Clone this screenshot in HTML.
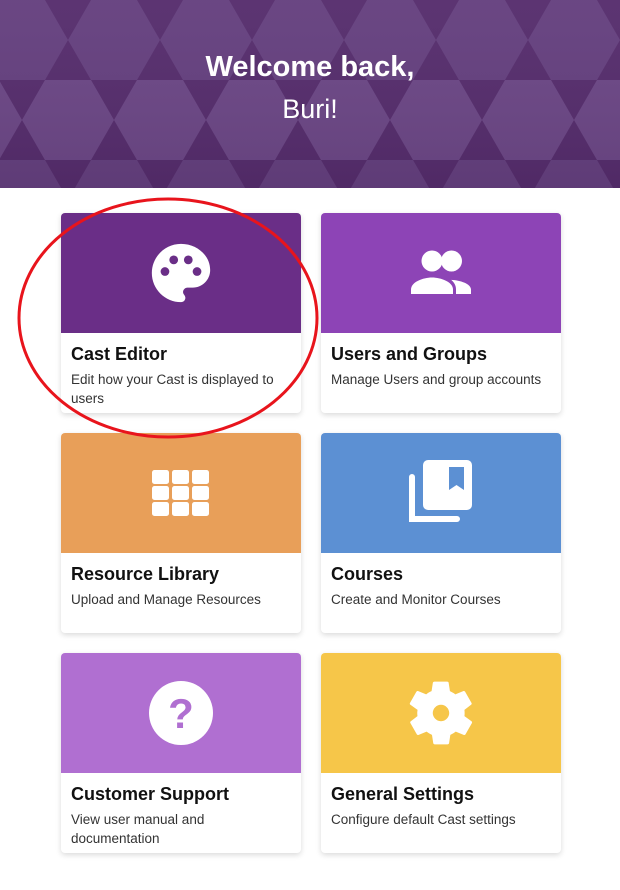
<!DOCTYPE html>
<html><head><meta charset="utf-8"><style>
*{margin:0;padding:0;box-sizing:border-box}
body{width:620px;height:890px;background:#fff;font-family:"Liberation Sans",sans-serif;position:relative;overflow:hidden}
.hdr{position:absolute;left:0;top:0;width:620px;height:188px;background:#542c6c;overflow:hidden}
.hdr svg{position:absolute;left:0;top:0}
.h1{position:absolute;top:51px;width:620px;text-align:center;color:#fff;font-weight:bold;font-size:29px}
.h2{position:absolute;top:94px;width:620px;text-align:center;color:#fff;font-size:27px}
.card{position:absolute;width:240px;height:200px;border-radius:4px;background:#fff;box-shadow:0 2px 6px rgba(0,0,0,.15);overflow:hidden}
.top{height:120px;display:flex;align-items:center;justify-content:center}
.t{position:absolute;left:10px;top:131px;font-size:18px;font-weight:bold;color:#111}
.d{position:absolute;left:10px;top:157px;font-size:13.5px;color:#333;line-height:19px;width:225px}
</style></head><body>
<div class="hdr">
<svg width="620" height="188">
<defs><pattern id="p" width="92" height="160" patternUnits="userSpaceOnUse" x="-24" y="-40">
<rect width="92" height="160" fill="#552c6c"/>
<g fill="#6b4685">
<polygon points="-46,0 -23,-40 23,-40 46,0 23,40 -23,40"/>
<polygon points="46,0 69,-40 115,-40 138,0 115,40 69,40"/>
<polygon points="-46,160 -23,120 23,120 46,160 23,200 -23,200"/>
<polygon points="46,160 69,120 115,120 138,160 115,200 69,200"/>
<polygon points="0,80 23,40 69,40 92,80 69,120 23,120" fill="#643f7e"/>
</g>
</pattern>
<linearGradient id="g" x1="0" y1="0" x2="0" y2="1"><stop offset="0" stop-color="#fff" stop-opacity=".04"/><stop offset="1" stop-color="#000" stop-opacity=".06"/></linearGradient></defs>
<rect width="620" height="188" fill="url(#p)"/>
<rect width="620" height="188" fill="url(#g)"/>
</svg>
<div class="h1">Welcome back,</div>
<div class="h2">Buri!</div>
</div>

<div class="card" style="left:61px;top:213px"><div class="top" style="background:#6a2e87">
<svg width="70" height="70" viewBox="0 0 24 24"><path fill="#fff" d="M12 2C6.5 2 2 6.5 2 12s4.5 10 10 10c.9 0 1.5-.7 1.5-1.5 0-.4-.2-.7-.4-1-.2-.3-.4-.6-.4-1 0-.8.7-1.5 1.5-1.5H16c3.3 0 6-2.7 6-6C22 6 17.5 2 12 2z"/><circle cx="6.5" cy="11.5" r="1.5" fill="#6a2e87"/><circle cx="9.5" cy="7.5" r="1.5" fill="#6a2e87"/><circle cx="14.5" cy="7.5" r="1.5" fill="#6a2e87"/><circle cx="17.5" cy="11.5" r="1.5" fill="#6a2e87"/></svg>
</div><div class="t">Cast Editor</div><div class="d">Edit how your Cast is displayed to users</div></div>

<div class="card" style="left:321px;top:213px"><div class="top" style="background:#8d44b6">
<svg width="72" height="72" viewBox="0 0 24 24"><circle cx="9" cy="8" r="3.5" fill="#fff"/><circle cx="15.5" cy="8" r="3.5" fill="#fff"/><path fill="#fff" d="M2 19v-1.5c0-2.5 4-4 7-4s7 1.5 7 4V19z"/><path fill="#fff" d="M17 19v-1.5c0-1.3-.6-2.4-1.6-3.2 2.9.1 6.6 1.3 6.6 3.2V19z"/></svg>
</div><div class="t">Users and Groups</div><div class="d">Manage Users and group accounts</div></div>

<div class="card" style="left:61px;top:433px"><div class="top" style="background:#e89f59">
<svg width="58" height="46" viewBox="0 0 58 46"><g fill="#fff"><rect x="0" y="0" width="17" height="14" rx="2.5"/><rect x="20" y="0" width="17" height="14" rx="2.5"/><rect x="40" y="0" width="17" height="14" rx="2.5"/><rect x="0" y="16" width="17" height="14" rx="2.5"/><rect x="20" y="16" width="17" height="14" rx="2.5"/><rect x="40" y="16" width="17" height="14" rx="2.5"/><rect x="0" y="32" width="17" height="14" rx="2.5"/><rect x="20" y="32" width="17" height="14" rx="2.5"/><rect x="40" y="32" width="17" height="14" rx="2.5"/></g></svg>
</div><div class="t">Resource Library</div><div class="d">Upload and Manage Resources</div></div>

<div class="card" style="left:321px;top:433px"><div class="top" style="background:#5c90d3">
<svg width="66" height="66" viewBox="0 0 66 66"><path fill="none" stroke="#fff" stroke-width="6" stroke-linecap="round" d="M4 17v42h45"/><rect x="15" y="0" width="49" height="50" rx="5" fill="#fff"/><path fill="#5c90d3" d="M41 7h15v23l-7.5-5-7.5 5z"/></svg>
</div><div class="t">Courses</div><div class="d">Create and Monitor Courses</div></div>

<div class="card" style="left:61px;top:653px"><div class="top" style="background:#b06fd1">
<svg width="66" height="66" viewBox="0 0 66 66"><circle cx="33" cy="33" r="32" fill="#fff"/><text x="33" y="48" text-anchor="middle" font-family="Liberation Sans" font-weight="bold" font-size="42" fill="#b06fd1">?</text></svg>
</div><div class="t">Customer Support</div><div class="d">View user manual and documentation</div></div>

<div class="card" style="left:321px;top:653px"><div class="top" style="background:#f6c649">
<svg width="76" height="76" viewBox="0 0 24 24"><path fill="#fff" d="M19.4 13c.04-.3.06-.6.06-1s-.02-.7-.06-1l2.1-1.6c.2-.15.25-.4.12-.6l-2-3.5c-.12-.2-.4-.3-.6-.2l-2.5 1c-.5-.4-1.1-.7-1.7-1l-.4-2.6c0-.2-.2-.4-.5-.4h-4c-.25 0-.45.2-.5.4l-.4 2.6c-.6.25-1.2.6-1.7 1l-2.5-1c-.2-.1-.5 0-.6.2l-2 3.5c-.13.2-.1.45.12.6L4.6 11c-.04.3-.1.7-.1 1s.03.7.07 1l-2.1 1.6c-.2.15-.25.4-.12.6l2 3.5c.12.2.4.3.6.2l2.5-1c.5.4 1.1.7 1.7 1l.4 2.6c.05.2.25.4.5.4h4c.25 0 .45-.2.5-.4l.4-2.6c.6-.25 1.2-.6 1.7-1l2.5 1c.2.1.5 0 .6-.2l2-3.5c.12-.2.07-.45-.12-.6zM12 14.6c-1.4 0-2.6-1.2-2.6-2.6S10.6 9.4 12 9.4s2.6 1.2 2.6 2.6-1.2 2.6-2.6 2.6z"/></svg>
</div><div class="t">General Settings</div><div class="d">Configure default Cast settings</div></div>

<svg width="620" height="890" style="position:absolute;left:0;top:0;pointer-events:none"><ellipse cx="168" cy="318" rx="149" ry="119" fill="none" stroke="#e8141c" stroke-width="3"/></svg>
</body></html>
